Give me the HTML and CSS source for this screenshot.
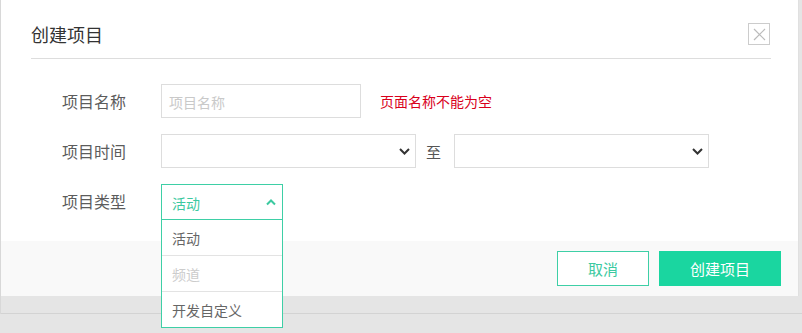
FILE: index.html
```html
<html>
<head>
<meta charset="utf-8">
<link rel="stylesheet" href="styles.css">
</head>
<body>
<div class="page">
  <div class="modal">
    <div class="modal-header">
      <h3 class="modal-title">创建项目</h3>
      <span class="close-btn">
        <svg width="13" height="13" viewBox="0 0 13 13"><path d="M1 1L12 12M12 1L1 12" stroke="#bbb" stroke-width="1.2" fill="none"/></svg>
      </span>
    </div>

    <div class="modal-body">
      <div class="form-row">
        <label class="form-label">项目名称</label>
        <div class="text-input"><span class="placeholder">项目名称</span></div>
        <span class="error-tip">页面名称不能为空</span>
      </div>

      <div class="form-row">
        <label class="form-label">项目时间</label>
        <div class="select-box wide">
          <svg class="chev" width="11" height="7" viewBox="0 0 11 7"><path d="M1 1L5.5 5.5L10 1" stroke="#333" stroke-width="2" fill="none"/></svg>
        </div>
        <span class="to">至</span>
        <div class="select-box wide">
          <svg class="chev" width="11" height="7" viewBox="0 0 11 7"><path d="M1 1L5.5 5.5L10 1" stroke="#333" stroke-width="2" fill="none"/></svg>
        </div>
      </div>

      <div class="form-row">
        <label class="form-label">项目类型</label>
        <div class="dropdown">
          <div class="dropdown-trigger">
            <span>活动</span>
            <svg width="10" height="7" viewBox="0 0 10 7"><path d="M1 5.5L5 1.5L9 5.5" stroke="#3cc9a0" stroke-width="2" fill="none"/></svg>
          </div>
          <ul class="dropdown-menu">
            <li>活动</li>
            <li class="disabled">频道</li>
            <li>开发自定义</li>
          </ul>
        </div>
      </div>
    </div>

    <div class="modal-footer">
      <button class="btn btn-cancel">取消</button>
      <button class="btn btn-primary">创建项目</button>
    </div>
  </div>
  <div class="under"></div>
</div>
</body>
</html>
```

FILE: styles.css
```css
body {
  margin: 0;
  background: #e5e5e5;
  font-family: "Noto Sans CJK SC", "Noto Sans", sans-serif;
}
.page {
  border-left: 1px solid #d8d8d8;
}
.modal {
  background: #fff;
  margin-right: 3px;
  border-right: 1px solid #e0e0e0;
}
.modal-header {
  margin: 0 27px 0 30px;
  height: 59px;
  border-bottom: 1px solid #ddd;
  display: flex;
  align-items: center;
  justify-content: space-between;
  box-sizing: border-box;
  padding-top: 10px;
}
.modal-title {
  margin: 0;
  font-size: 18px;
  font-weight: normal;
  color: #333;
}
.close-btn {
  width: 20px;
  height: 20px;
  border: 1px solid #ccc;
  display: flex;
  align-items: center;
  justify-content: center;
  margin-right: 1px;
}
.modal-body {
  padding: 25px 0 21px 30px;
}
.form-row {
  display: flex;
  align-items: center;
  height: 34px;
  margin-bottom: 16px;
}
.form-row:last-child {
  margin-bottom: 0;
  height: 36px;
}
.form-label {
  width: 95px;
  text-align: right;
  font-size: 16px;
  color: #5c5c5c;
  margin-right: 35px;
  align-self: flex-start;
  margin-top: 5px;
}
.text-input {
  height: 32px;
  border: 1px solid #ddd;
  display: flex;
  align-items: center;
  padding: 2px 0 0 7px;
  box-sizing: border-box;
  height: 34px;
  width: 200px;
}
.placeholder {
  font-size: 14px;
  color: #c9c9c9;
}
.error-tip {
  margin-left: 19px;
  font-size: 14px;
  color: #d9001b;
}
.select-box {
  height: 32px;
  border: 1px solid #ddd;
  display: flex;
  align-items: center;
  justify-content: flex-end;
  padding-right: 5px;
}
.select-box.wide {
  width: 248px;
}
.to {
  margin: 0 13px 0 10px;
  font-size: 15px;
  color: #555;
}
.dropdown {
  position: relative;
  width: 122px;
  height: 36px;
}
.dropdown-trigger {
  height: 34px;
  border: 1px solid #3ecfa6;
  display: flex;
  align-items: center;
  justify-content: space-between;
  padding: 0 6px 0 10px;
  font-size: 14px;
  color: #3cc9a0;
}
.dropdown-trigger span {
  margin-top: 2px;
}
.dropdown-menu {
  position: absolute;
  top: 36px;
  left: 0;
  width: 120px;
  margin: 0;
  padding: 0;
  list-style: none;
  background: #fff;
  border: 1px solid #3ecfa6;
  border-top: none;
  z-index: 2;
}
.dropdown-menu li {
  height: 35px;
  line-height: 36px;
  padding-left: 10px;
  font-size: 14px;
  color: #666;
  border-bottom: 1px solid #e3e3e3;
}
.dropdown-menu li:last-child {
  border-bottom: none;
}
.dropdown-menu li.disabled {
  color: #ccc;
}
.modal-footer {
  background: #f9f9f9;
  height: 55px;
  display: flex;
  justify-content: flex-end;
  align-items: flex-start;
  padding: 10px 17px 0 0;
  box-sizing: border-box;
}
.btn {
  height: 35px;
  font-family: "Noto Sans CJK SC", "Noto Sans", sans-serif;
  font-size: 15px;
  cursor: pointer;
  padding: 0;
}
.btn-cancel {
  width: 92px;
  background: #fff;
  color: #3cc9a0;
  border: 1px solid #3ecfa6;
  margin-right: 10px;
}
.btn-primary {
  width: 122px;
  background: #1ad6a0;
  color: #fff;
  border: none;
}
.under {
  height: 17px;
  border-bottom: 1px solid #d3d3d3;
}
```
